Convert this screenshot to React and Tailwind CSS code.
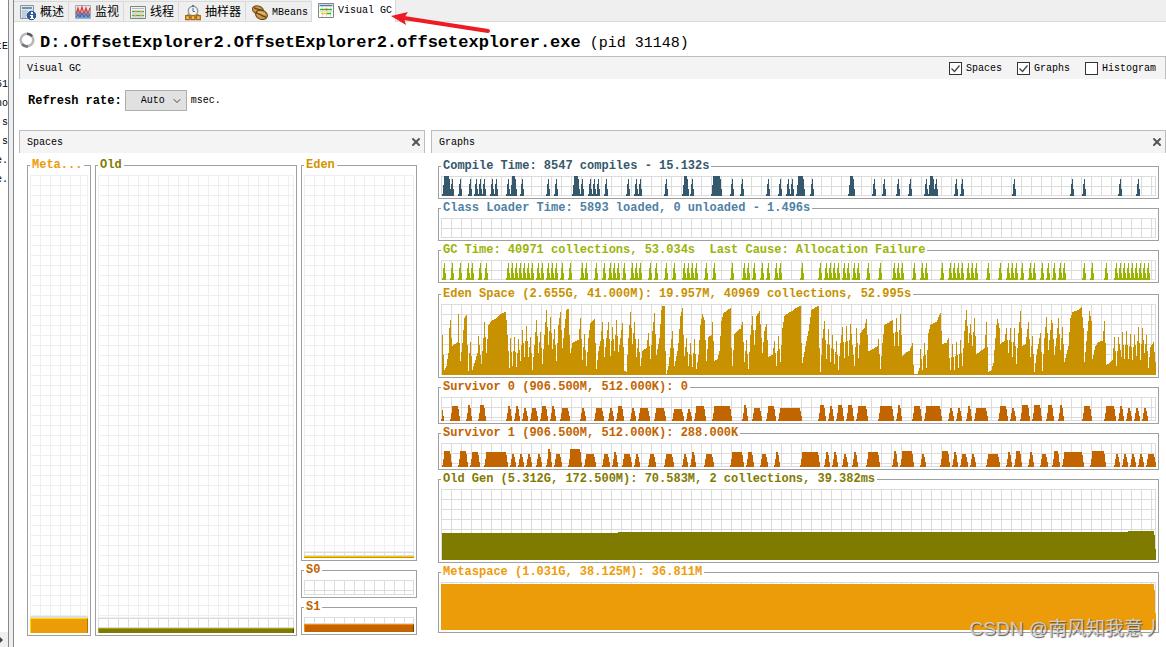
import React, { useState } from 'react';
import { ChevronDown, X } from 'lucide-react';

const MONO = "font-['Liberation_Mono','Noto_Sans_CJK_SC',monospace]";

const GRID_DARK =
  'bg-[linear-gradient(to_right,#dcdcdc_1px,transparent_1px),linear-gradient(to_bottom,#dcdcdc_1px,transparent_1px)] bg-[size:10px_10px] shadow-[inset_-1px_-1px_#dcdcdc]';
const GRID_LIGHT =
  'bg-[linear-gradient(to_right,#efefef_1px,transparent_1px),linear-gradient(to_bottom,#efefef_1px,transparent_1px)] bg-[size:10px_10px] shadow-[inset_-1px_-1px_#efefef]';

const CHART_WIDTH = 715;

// Sample positions of short bursts of activity
const COMPILE_SPIKES = [
  11, 19, 29, 35, 39, 43, 51, 55, 67, 81, 107, 115, 141, 149, 153, 157, 165, 187, 195, 199, 225, 251,
  291, 301, 327, 339, 347, 351, 371, 433, 443, 457, 469, 485, 495, 515, 521, 573, 631, 643, 679, 697,
];
const COMPILE_BLOCKS = [
  [3, 7], [71, 73], [133, 136], [243, 245], [272, 278], [357, 361], [409, 411], [489, 491],
];
const GC_SPIKES = [
  3, 11, 19, 27, 31, 39, 45, 67, 71, 75, 79, 83, 87, 91, 97, 101, 107, 111, 115, 121, 129, 141, 145,
  155, 163, 169, 173, 177, 183, 191, 195, 199, 209, 215, 225, 233, 243, 247, 251, 255, 265, 273, 291,
  303, 307, 313, 321, 327, 335, 339, 361, 379, 385, 389, 393, 397, 403, 407, 413, 417, 427, 439, 453,
  457, 461, 473, 481, 485, 501, 509, 513, 517, 521, 527, 531, 535, 547, 559, 567, 571, 575, 581, 589,
  593, 601, 607, 613, 619, 623, 643, 651, 665, 675, 679, 683, 687, 691, 695, 699, 703, 707,
];

// [sample, used] pairs
const EDEN = [
  [1, 40], [2, 20], [3, 5], [5, 9], [7, 22], [8, 47], [9, 55], [10, 37], [11, 29], [16, 33], [17, 61],
  [18, 32], [19, 14], [21, 32], [23, 57], [25, 60], [26, 30], [27, 4], [28, 22], [29, 33], [31, 5],
  [33, 12], [36, 22], [37, 39], [39, 20], [40, 11], [42, 37], [43, 53], [45, 22], [47, 50], [50, 54],
  [54, 56], [58, 60], [62, 62], [64, 63], [65, 55], [67, 24], [68, 7], [69, 37], [71, 9], [73, 38],
  [75, 8], [77, 36], [79, 14], [81, 45], [83, 18], [85, 49], [87, 18], [89, 38], [91, 5], [93, 30],
  [95, 55], [97, 22], [99, 43], [101, 11], [103, 40], [105, 65], [107, 30], [109, 58], [111, 26],
  [113, 46], [115, 14], [117, 50], [119, 63], [121, 27], [123, 47], [125, 65], [127, 66], [128, 40],
  [129, 22], [131, 32], [137, 35], [139, 57], [141, 15], [143, 41], [145, 9], [147, 37], [149, 52],
  [153, 56], [154, 32], [155, 6], [157, 24], [159, 34], [161, 53], [163, 18], [165, 37], [167, 53],
  [169, 19], [171, 48], [173, 24], [175, 55], [177, 23], [179, 37], [181, 52], [183, 4], [185, 3],
  [187, 37], [189, 63], [191, 31], [193, 53], [195, 18], [197, 36], [199, 9], [201, 24], [205, 27],
  [207, 42], [209, 16], [211, 44], [213, 62], [215, 20], [218, 37], [220, 65], [221, 69], [223, 69],
  [224, 24], [225, 1], [227, 9], [229, 27], [231, 44], [233, 9], [236, 24], [237, 32], [239, 59],
  [241, 67], [242, 40], [243, 19], [245, 37], [247, 9], [249, 32], [251, 8], [253, 36], [255, 6],
  [257, 20], [259, 50], [261, 61], [263, 55], [265, 14], [267, 38], [270, 40], [271, 53], [273, 14],
  [276, 16], [278, 24], [280, 54], [282, 62], [285, 64], [289, 67], [290, 27], [291, 9], [293, 41],
  [297, 45], [299, 46], [301, 53], [303, 13], [305, 35], [307, 6], [309, 40], [311, 59], [313, 30],
  [315, 59], [318, 64], [320, 37], [321, 22], [323, 44], [325, 51], [327, 18], [331, 20], [333, 34],
  [335, 9], [337, 39], [339, 13], [341, 47], [343, 59], [347, 62], [352, 65], [356, 68], [359, 69],
  [360, 32], [361, 12], [364, 29], [367, 44], [370, 65], [373, 67], [377, 69], [378, 27], [379, 3],
  [381, 37], [383, 54], [385, 16], [387, 46], [389, 13], [391, 40], [393, 11], [395, 34], [397, 5],
  [399, 32], [401, 48], [403, 17], [405, 49], [407, 19], [409, 51], [413, 9], [415, 47], [417, 17],
  [419, 42], [423, 47], [425, 56], [427, 24], [432, 26], [436, 29], [437, 36], [439, 6], [441, 32],
  [443, 50], [448, 53], [451, 55], [453, 29], [455, 57], [457, 29], [459, 61], [461, 19], [464, 22],
  [468, 24], [471, 32], [472, 10], [473, 0], [476, 1], [478, 7], [479, 26], [481, 5], [483, 32],
  [485, 7], [487, 42], [489, 50], [495, 53], [499, 62], [500, 44], [501, 31], [505, 32], [507, 37],
  [508, 17], [509, 5], [511, 31], [513, 5], [515, 33], [517, 7], [519, 35], [521, 9], [523, 44],
  [525, 65], [527, 32], [529, 51], [531, 29], [533, 57], [535, 21], [538, 23], [543, 27], [545, 53],
  [547, 3], [550, 5], [552, 12], [555, 50], [556, 56], [558, 47], [559, 31], [563, 34], [565, 47],
  [567, 22], [569, 47], [571, 18], [573, 47], [575, 11], [577, 42], [579, 64], [581, 29], [584, 31],
  [587, 53], [589, 18], [591, 39], [593, 3], [595, 20], [599, 42], [601, 4], [603, 37], [605, 58],
  [607, 25], [610, 55], [611, 52], [613, 20], [615, 37], [617, 57], [619, 25], [621, 48], [623, 13],
  [627, 29], [629, 57], [631, 63], [635, 64], [638, 66], [640, 68], [642, 47], [643, 13], [646, 44],
  [648, 64], [650, 54], [651, 16], [654, 29], [657, 33], [661, 34], [663, 54], [665, 10], [668, 12],
  [671, 15], [673, 38], [675, 9], [677, 38], [680, 18], [681, 43], [683, 16], [685, 44], [687, 16],
  [689, 41], [691, 15], [693, 40], [695, 19], [697, 48], [699, 15], [701, 47], [703, 22], [705, 40],
  [707, 7], [709, 28], [712, 33], [714, 13],
];

// [first sample, last sample, used]
const SURVIVOR_0 = [
  [0, 3, 14], [9, 19, 15], [25, 31, 16], [37, 45, 16], [65, 71, 15], [73, 79, 15], [81, 87, 13],
  [89, 97, 13], [99, 107, 15], [109, 115, 15], [119, 129, 13], [139, 145, 13], [153, 163, 13],
  [167, 173, 13], [175, 183, 15], [189, 195, 13], [197, 209, 13], [213, 225, 13], [231, 243, 12],
  [245, 251, 12], [253, 265, 15], [271, 291, 15], [301, 307, 16], [311, 321, 13], [325, 335, 15],
  [337, 361, 13], [377, 385, 16], [387, 393, 15], [395, 403, 16], [405, 413, 16], [415, 427, 15],
  [437, 453, 15], [455, 461, 16], [471, 481, 15], [483, 501, 15], [507, 513, 13], [515, 521, 13],
  [525, 531, 15], [533, 547, 13], [557, 567, 15], [569, 575, 13], [579, 589, 16], [591, 601, 16],
  [605, 613, 16], [617, 623, 16], [641, 651, 15], [663, 675, 15], [677, 683, 15], [685, 691, 13],
  [693, 699, 13], [701, 707, 13],
];
const SURVIVOR_1 = [
  [1, 11, 16], [17, 27, 16], [29, 39, 15], [43, 67, 15], [69, 75, 13], [77, 83, 13], [85, 91, 13],
  [95, 101, 13], [105, 111, 18], [113, 121, 13], [127, 141, 18], [143, 155, 13], [161, 169, 13],
  [171, 177, 15], [181, 191, 13], [193, 199, 13], [207, 215, 13], [223, 233, 13], [241, 247, 13],
  [249, 255, 15], [263, 273, 13], [289, 303, 15], [305, 313, 15], [319, 327, 13], [333, 339, 15],
  [359, 379, 15], [383, 389, 15], [391, 397, 15], [401, 407, 13], [411, 417, 15], [425, 439, 15],
  [451, 457, 16], [459, 473, 16], [479, 485, 13], [499, 509, 16], [511, 517, 15], [519, 527, 13],
  [529, 535, 13], [545, 559, 13], [565, 571, 15], [573, 581, 16], [587, 593, 15], [599, 607, 13],
  [611, 619, 16], [621, 643, 15], [649, 665, 16], [673, 679, 13], [681, 687, 13], [689, 695, 13],
  [697, 703, 13], [705, 715, 13],
];

// Each column is [x, width, height] measured up from the baseline
const column = (h) => ([x, w, v]) => `M${x} ${h}v${-v}h${w}v${v}z`;

function spikePath(h, spikes, blocks = []) {
  const columns = [];
  spikes.forEach((x) => columns.push([x - 2, 1, 2], [x - 1, 1, 12], [x, 1, 17], [x + 1, 1, 7]));
  blocks.forEach(([a, b]) =>
    columns.push([a - 2, 1, 2], [a - 1, 1, 11], [a, b - a + 1, 20], [b + 1, 1, 17], [b + 2, 1, 7])
  );
  return columns.map(column(h)).join('');
}

function humpPath(h, humps) {
  return humps
    .flatMap(([a, b, v]) => [
      [a, 1, 2],
      [a + 1, 1, 8],
      [a + 2, b - a - 4, v],
      [b - 2, 1, v - 3],
      [b - 1, 1, 5],
    ])
    .filter(([, w]) => w > 0)
    .map(column(h))
    .join('');
}

function areaPath(h, points) {
  const columns = [];
  for (let i = 0; i < points.length; i += 1) {
    const [x0, v0] = points[i];
    const [x1, v1] = points[i + 1] || [x0 + 1, v0];
    for (let x = x0; x < x1; x += 1) {
      columns.push([x, 1, Math.max(1, Math.round(v0 + ((v1 - v0) * (x - x0)) / (x1 - x0)))]);
    }
  }
  return columns.map(column(h)).join('');
}

const GRAPHS = [
  {
    title: 'Compile Time: 8547 compiles - 15.132s',
    text: 'text-[#35586c]',
    fill: 'fill-[#35586c]',
    size: 'h-5',
    height: 20,
    path: spikePath(20, COMPILE_SPIKES, COMPILE_BLOCKS),
  },
  {
    title: 'Class Loader Time: 5893 loaded, 0 unloaded - 1.496s',
    text: 'text-[#4f81a5]',
    fill: 'fill-[#4f81a5]',
    size: 'h-5',
    height: 20,
    path: '',
  },
  {
    title: 'GC Time: 40971 collections, 53.034s  Last Cause: Allocation Failure',
    text: 'text-[#9bb40a]',
    fill: 'fill-[#9ab300]',
    size: 'h-5',
    spacing: 'mb-0.5',
    height: 20,
    path: spikePath(20, GC_SPIKES),
  },
  {
    title: 'Eden Space (2.655G, 41.000M): 19.957M, 40969 collections, 52.995s',
    text: 'text-[#c79100]',
    fill: 'fill-[#c79100]',
    size: 'h-[71px]',
    height: 71,
    path: areaPath(71, EDEN),
  },
  {
    title: 'Survivor 0 (906.500M, 512.000K): 0',
    text: 'text-[#c26400]',
    fill: 'fill-[#c26400]',
    size: 'h-6',
    height: 24,
    path: humpPath(24, SURVIVOR_0),
  },
  {
    title: 'Survivor 1 (906.500M, 512.000K): 288.000K',
    text: 'text-[#c26400]',
    fill: 'fill-[#c26400]',
    size: 'h-6',
    height: 24,
    path: humpPath(24, SURVIVOR_1),
  },
  {
    title: 'Old Gen (5.312G, 172.500M): 70.583M, 2 collections, 39.382ms',
    text: 'text-[#7f7b00]',
    fill: 'fill-[#7f7b00]',
    size: 'h-[71px]',
    height: 71,
    path: [[1, 176, 27], [177, 510, 28], [687, 26, 29], [713, 1, 25], [714, 1, 11]].map(column(71)).join(''),
  },
  {
    title: 'Metaspace (1.031G, 38.125M): 36.811M',
    text: 'text-[#ed9c09]',
    fill: 'fill-[#ed9c09]',
    size: 'h-12',
    height: 48,
    path: [[0, 713, 46], [713, 1, 40], [714, 1, 17]].map(column(48)).join(''),
  },
];

function OverviewIcon() {
  return (
    <svg className="w-4 h-4 shrink-0" viewBox="0 0 16 16" aria-hidden="true">
      <path d="M.5.5h13v13H.5z" fill="#dfe7ee" stroke="#8397a8" />
      <path d="M2 2h10v2H2z" fill="#7292ae" />
      <path d="M2 6h6M2 8h5M2 10h5M2 12h4" stroke="#a4b5c2" />
      <circle cx="11.5" cy="10.5" r="4.2" fill="#315da8" stroke="#244580" />
      <path d="M11 7h2v2h-2zM10 10h3v3h1v1h-4v-1h1v-2h-1z" fill="#fff" />
    </svg>
  );
}

function MonitorIcon() {
  return (
    <svg className="w-4 h-4 shrink-0" viewBox="0 0 16 16" aria-hidden="true">
      <path d="M.5.5h15v13H.5z" fill="#e5e8eb" stroke="#a5acb3" />
      <path d="M1 13V8l2-3 2 5 2-4 2 5 2-6 2 5 2-3v6z" fill="#6b9fd4" />
      <path d="M1 9l2-6 2 6 2-7 2 7 2-6 2 6 2-6" fill="none" stroke="#d64440" strokeWidth="1.3" />
      <path d="M1 12l2-3 2 3 2-4 2 4 2-3 2 3 2-3" fill="none" stroke="#2f65ab" />
    </svg>
  );
}

function ThreadsIcon() {
  return (
    <svg className="w-4 h-4 shrink-0" viewBox="0 0 16 16" aria-hidden="true">
      <path d="M.5 1.5h15v12H.5z" fill="#f4f5ef" stroke="#7c8588" />
      <path d="M2 3.5h12" stroke="#a9bbcb" />
      <path d="M2 6.5h12M2 10.5h12" stroke="#56a45b" strokeWidth="1.6" />
      <path d="M5 6.5h2m3 0h2M4 10.5h2m4 0h2" stroke="#e9a72e" strokeWidth="1.6" />
      <path d="M2 8.5h12M2 12.5h12" stroke="#d9ddd8" />
    </svg>
  );
}

function SamplerIcon() {
  return (
    <svg className="w-4 h-4 shrink-0" viewBox="0 0 16 16" aria-hidden="true">
      <circle cx="8" cy="6" r="4.7" fill="#f1f4f6" stroke="#8d979f" strokeWidth="1.4" />
      <path d="M7 0h2v2H7z" fill="#68737c" />
      <path d="M8 3v3.5h2" fill="none" stroke="#586977" />
      <path d="M3 11V9m10 2V9M5 12.5h6" stroke="#956b20" strokeWidth="1.4" />
      <path d="M.7 10.7h3.8v4H.7zM6.1 10.7h3.8v4H6.1zM11.5 10.7h3.8v4h-3.8z" fill="#f3bd55" stroke="#a66a16" strokeWidth="1.3" />
    </svg>
  );
}

function MBeansIcon() {
  return (
    <svg className="w-4 h-4 shrink-0" viewBox="0 0 16 16" aria-hidden="true">
      <ellipse cx="6" cy="5" rx="5.8" ry="4" transform="rotate(20 6 5)" fill="#c99a4c" stroke="#704a16" />
      <ellipse cx="9.5" cy="9.8" rx="6" ry="4.6" transform="rotate(20 9.5 9.8)" fill="#c9984a" stroke="#63400f" />
      <path d="M2 3c2 0 3 2 8 2M4 8c4 0 4 3 10 4" fill="none" stroke="#6c4513" strokeWidth="1.3" />
      <path d="M6 7.5c3-1 4 1 7 1.5" fill="none" stroke="#ecd08b" />
    </svg>
  );
}

function VisualGcIcon() {
  return (
    <svg className="w-4 h-4 shrink-0" viewBox="0 0 16 16" aria-hidden="true">
      <path d="M.5.5h15v14H.5z" fill="#fff" stroke="#858585" />
      <path d="M1 1h14v3H1z" fill="#cbd8e6" />
      <path d="M2 2.5h12" stroke="#5878a2" />
      <path d="M4.5 4v10M8.5 4v10M12.5 4v10M1 8.5h14" stroke="#ddd" />
      <path d="M2 6.5h12" stroke="#19c51c" strokeWidth="1.4" />
      <path d="M7 6.5h3" stroke="#f05a22" strokeWidth="1.4" />
      <path d="M3 10.5h8" stroke="#ffc20d" strokeWidth="1.4" />
      <path d="M9 10.5h4" stroke="#19c51c" strokeWidth="1.4" />
    </svg>
  );
}

const TABS = [
  { label: '概述', icon: OverviewIcon },
  { label: '监视', icon: MonitorIcon },
  { label: '线程', icon: ThreadsIcon },
  { label: '抽样器', icon: SamplerIcon },
  { label: 'MBeans', icon: MBeansIcon, latin: true },
  { label: 'Visual GC', icon: VisualGcIcon, latin: true },
];

function TabBar() {
  const [active, setActive] = useState('Visual GC');

  return (
    <div role="tablist" className="flex h-[22px] bg-[#efefef]">
      {TABS.map((tab) => {
        const selected = tab.label === active;
        return (
          <button
            key={tab.label}
            type="button"
            role="tab"
            aria-selected={selected}
            onClick={() => setActive(tab.label)}
            className={`flex items-center gap-1 border-r border-[#d9d9d9] whitespace-nowrap leading-4 ${
              tab.latin ? 'pl-1.5 pr-[3px] text-[10px]' : 'pl-1.5 pr-1 text-[12px]'
            } ${selected ? 'bg-white' : 'border-y mt-px pt-0.5'}`}
          >
            <tab.icon />
            {tab.label}
          </button>
        );
      })}
      <div className="flex-1 border-b border-[#d9d9d9]" />
    </div>
  );
}

function CheckOption({ label, initial }) {
  const [checked, setChecked] = useState(initial);

  return (
    <label className="flex items-center gap-1">
      <span className="grid">
        <input
          type="checkbox"
          checked={checked}
          onChange={(e) => setChecked(e.target.checked)}
          className="col-start-1 row-start-1 appearance-none w-[13px] h-[13px] bg-white border border-[#333]"
        />
        {checked && (
          <svg className="col-start-1 row-start-1 w-[13px] h-[13px] pointer-events-none" viewBox="0 0 13 13">
            <path d="M2.5 6.5l3 3 5-6" fill="none" stroke="#444" strokeWidth="1.3" />
          </svg>
        )}
      </span>
      {label}
    </label>
  );
}

function PanelHeader({ title, children }) {
  return (
    <div className="flex items-center justify-between h-[23px] pl-[7px] pt-px border border-b-0 border-[#bcbcbc] bg-[#f4f4f4]">
      <h2>{title}</h2>
      {children}
    </div>
  );
}

function CloseButton({ label }) {
  return (
    <button type="button" aria-label={label} className="px-0.5 pb-0.5">
      <X className="w-3 h-3 text-[#555]" strokeWidth={4} />
    </button>
  );
}

function Box({ title, color, className = '', children }) {
  return (
    <fieldset className={`min-w-0 border border-[#a0a0a0] px-0.5 pb-0.5 ${className}`}>
      <legend className={`max-w-full truncate whitespace-pre px-0.5 text-[12px] leading-[12px] font-bold ${color}`}>
        {title}
      </legend>
      {children}
    </fieldset>
  );
}

// Reserved area on top, committed area below it, used part at the bottom
function Space({ title, color, className, committed, used }) {
  return (
    <Box title={title} color={color} className={`flex flex-col pt-1 ${className}`}>
      <div className={`flex-1 ${GRID_LIGHT}`} />
      {committed && <div className={`${committed} ${GRID_DARK}`} />}
      {used && <div className={used} />}
    </Box>
  );
}

function SpacesPanel() {
  return (
    <section className="flex flex-col flex-[406_406_0%] min-w-0">
      <PanelHeader title="Spaces">
        <CloseButton label="Close Spaces" />
      </PanelHeader>
      <div className="flex flex-1 gap-1 px-2 pt-1.5 pb-[11px]">
        <Space
          title="Meta..."
          color="text-[#ed9c09]"
          className="flex-[58_58_0%]"
          committed="h-0.5"
          used="h-[15px] bg-[#ed9c09] border-t border-l border-r border-t-[#ffdc00] border-l-[#ffdc00] border-r-[#b57400]"
        />
        <Space
          title="Old"
          color="text-[#7f7b00]"
          className="flex-[196_196_0%]"
          committed="h-[10px]"
          used="h-[5px] bg-[#7f7b00] border-t border-l border-r border-t-[#aaa400] border-l-[#aaa400] border-r-[#4f4c00]"
        />
        <div className="flex flex-col flex-[116_116_0%] min-w-0 gap-[3px] pb-px">
          <Space
            title="Eden"
            color="text-[#d39400]"
            className="flex-1"
            committed="h-1"
            used="h-0.5 bg-[#c79100] border-t border-[#ffcb00]"
          />
          <Space title="S0" color="text-[#c26400]" className="h-[34px]" committed="h-[15px]" />
          <Space
            title="S1"
            color="text-[#c26400]"
            className="h-[34px]"
            committed="h-[7px]"
            used="h-2 bg-[#c26400] border-t border-l border-r border-t-[#ff8a00] border-l-[#ff8a00] border-r-[#7d4000]"
          />
        </div>
      </div>
    </section>
  );
}

function GraphsPanel() {
  return (
    <section className="flex flex-col flex-[735_735_0%] min-w-0">
      <PanelHeader title="Graphs">
        <CloseButton label="Close Graphs" />
      </PanelHeader>
      <div className="flex flex-col gap-[3px] px-[7px] pt-[7px]">
        {GRAPHS.map((graph) => (
          <Box key={graph.title} title={graph.title} color={graph.text} className={`pt-1 ${graph.spacing || ''}`}>
            <div className={`${graph.size} ${GRID_DARK}`}>
              <svg
                className={`block w-full h-full ${graph.fill}`}
                viewBox={`0 0 ${CHART_WIDTH} ${graph.height}`}
                preserveAspectRatio="none"
                shapeRendering="crispEdges"
              >
                <path d={graph.path} />
              </svg>
            </div>
          </Box>
        ))}
      </div>
    </section>
  );
}

// Edge of the applications tree, mostly scrolled out of view
function TreeEdge() {
  return (
    <aside className="flex flex-col justify-between w-[14px] shrink-0 border-r border-[#858590] bg-[#efefef]">
      <div className="flex flex-col items-end w-[9px] flex-1 pt-[37px] overflow-hidden border-r border-[#858590] bg-white text-[10px] leading-[19px]">
        <span>tE</span>
        <span className="pt-[19px]">51</span>
        <span>ho</span>
        <span>s</span>
        <span>s</span>
        <span>e.</span>
        <span>e.</span>
      </div>
      <div className="flex items-center w-[9px] h-[15px] border-r border-[#858590]">
        <svg className="w-[3px] h-[6px]" viewBox="0 0 3 6">
          <path d="M0 0l3 3-3 3z" fill="#444" />
        </svg>
      </div>
    </aside>
  );
}

export default function App() {
  return (
    <div className={`relative flex min-h-screen bg-white text-black text-[10px] leading-4 ${MONO}`}>
      <TreeEdge />

      <main className="flex flex-col flex-1 min-w-0">
        <TabBar />

        <div className="flex items-center h-[34px] pl-[5px] pt-2">
          <svg className="w-4 h-4 mb-1.5 shrink-0" viewBox="0 0 16 16" fill="none" strokeWidth="2.6">
            <circle cx="8" cy="8" r="6.3" stroke="#b9b9bd" />
            <path d="M8 1.7a6.3 6.3 0 0 1 5 2.5" stroke="#55555c" />
            <path d="M9 14.2a6.3 6.3 0 0 1-6-2" stroke="#77777e" />
          </svg>
          <h1 className="pl-[5px] text-[15px] leading-5 whitespace-nowrap">
            <b className="text-[17px]">D:.OffsetExplorer2.OffsetExplorer2.offsetexplorer.exe</b> (pid 31148)
          </h1>
        </div>

        <div className="flex flex-col flex-1 pl-[5px]">
          <PanelHeader title="Visual GC">
            <div className="flex gap-[15px] pr-[9px]">
              <CheckOption label="Spaces" initial />
              <CheckOption label="Graphs" initial />
              <CheckOption label="Histogram" initial={false} />
            </div>
          </PanelHeader>

          <div className="flex items-center h-[51px] pl-[9px] pb-2">
            <label htmlFor="refresh-rate" className="pr-[3px] text-[12px] font-bold">
              Refresh rate:
            </label>
            <span className="grid items-center">
              <select
                id="refresh-rate"
                defaultValue="Auto"
                className="col-start-1 row-start-1 appearance-none w-[62px] h-[21px] pl-[15px] border border-[#adadad] bg-[#e1e1e1]"
              >
                <option>Auto</option>
                <option>100</option>
                <option>200</option>
                <option>500</option>
              </select>
              <ChevronDown className="col-start-1 row-start-1 justify-self-end mr-1 w-3 h-3 text-[#444] pointer-events-none" />
            </span>
            <span className="pl-1">msec.</span>
          </div>

          <div className="flex flex-1 gap-1.5">
            <SpacesPanel />
            <GraphsPanel />
          </div>
        </div>
      </main>

      {/* Callout pointing at the active tab */}
      <svg className="absolute left-[390px] top-2 w-[102px] h-7 pointer-events-none" viewBox="0 0 102 28">
        <path d="M98 23L14 10" stroke="#ed1c24" strokeWidth="4" strokeLinecap="round" />
        <path d="M1 8l17-4-4 6 2 7z" fill="#ed1c24" />
      </svg>

      <div className="absolute right-1 bottom-1.5 font-['Liberation_Sans','Noto_Sans_CJK_SC',sans-serif] text-[19px] leading-6 whitespace-nowrap text-[#d6d6d6]/90 [text-shadow:1px_1px_1px_#555]">
        CSDN @南风知我意丿
      </div>
    </div>
  );
}
